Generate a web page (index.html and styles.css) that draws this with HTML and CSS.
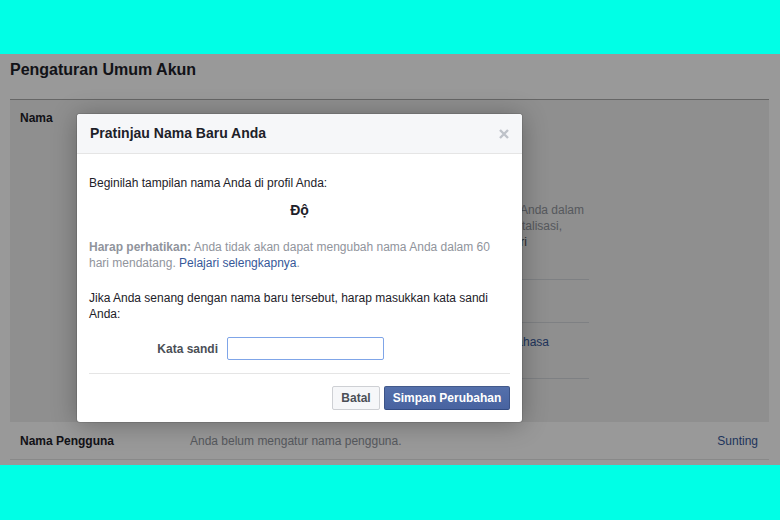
FILE: index.html
```html
<!DOCTYPE html>
<html lang="id">
<head>
<meta charset="utf-8">
<title>Pengaturan Umum Akun</title>
<link rel="stylesheet" href="styles.css">
</head>
<body>
<div class="band band-top"></div>
<main class="stage">
  <div class="page">
    <h1 class="page-title">Pengaturan Umum Akun</h1>
    <section class="row row-open">
      <div class="row-label">Nama</div>
      <div class="row-form">
        <div class="fields">
          <span class="fake-input"></span>
          <span class="fake-input"></span>
          <span class="fake-input"></span>
        </div>
        <div class="note">
          <div class="nl nl1">Anda dalam</div>
          <div class="nl nl2">kapitalisasi,</div>
          <div class="nl nl3">jari</div>
        </div>
        <div class="sep sep-first"></div>
        <div class="sub"></div>
        <div class="sep"></div>
        <div class="lang"><div class="lang-line"><a class="link">bahasa</a></div></div>
        <div class="sep"></div>
        <div class="form-actions"></div>
      </div>
    </section>
    <section class="row row-closed">
      <div class="row-label">Nama Pengguna</div>
      <div class="row-value">Anda belum mengatur nama pengguna.</div>
      <a class="link row-edit">Sunting</a>
    </section>
  </div>
  <div class="overlay"></div>
  <div class="dialog" role="dialog">
    <div class="dialog-head">
      <h2 class="dialog-title">Pratinjau Nama Baru Anda</h2>
      <svg class="dialog-close" width="10" height="10" viewBox="0 0 10 10" aria-label="Tutup"><path d="M1 1L9 9M9 1L1 9" stroke="#bec2c9" stroke-width="2.4"/></svg>
    </div>
    <div class="dialog-body">
      <p class="lead">Beginilah tampilan nama Anda di profil Anda:</p>
      <div class="preview">Độ</div>
      <p class="warn"><b>Harap perhatikan:</b> Anda tidak akan dapat mengubah nama Anda dalam 60<br>hari mendatang. <a class="link">Pelajari selengkapnya</a>.</p>
      <p class="confirm">Jika Anda senang dengan nama baru tersebut, harap masukkan kata sandi<br>Anda:</p>
      <div class="pw-row">
        <label class="pw-label" for="pw">Kata sandi</label>
        <input class="pw-input" id="pw" type="password">
      </div>
      <div class="dialog-sep"></div>
      <div class="dialog-foot">
        <button class="btn btn-cancel" type="button">Batal</button>
        <button class="btn btn-primary" type="button">Simpan Perubahan</button>
      </div>
    </div>
  </div>
</main>
<div class="band band-bottom"></div>
</body>
</html>
```
FILE: styles.css
```css
* { box-sizing: border-box; }

html, body {
  margin: 0;
  padding: 0;
}

body {
  background: #00ffe6;
  font-family: "Liberation Sans", Arial, sans-serif;
  font-size: 12px;
  line-height: 16px;
  color: #1d2129;
  width: 780px;
  height: 520px;
  overflow: hidden;
}

.band { background: #00ffe6; }
.band-top { height: 54px; }
.band-bottom { height: 55px; }

.stage {
  position: relative;
  height: 411px;
  background: #ffffff;
  overflow: hidden;
}

.page {
  padding: 0 11px 0 10px;
}

.page-title {
  margin: 0;
  padding: 6px 0 19px;
  font-size: 16px;
  line-height: 20px;
  font-weight: bold;
  color: #1d2129;
  border-bottom: 1px solid #aaaaaa;
}

.row {
  display: flex;
  padding-left: 10px;
}

.row-label {
  width: 170px;
  flex: none;
  font-weight: bold;
  color: #1d2129;
}

.row-open {
  background: #eeeeee;
  padding-top: 10px;
}

.row-form {
  width: 399px;
  display: flex;
  flex-direction: column;
}

.fields {
  margin-top: 4px;
  display: flex;
  flex-direction: column;
  gap: 5px;
  padding-left: 70px;
}

.fake-input {
  display: block;
  width: 200px;
  height: 24px;
  background: #fff;
  border: 1px solid #bdc7d8;
}

.note {
  margin-top: 6px;
  color: #90949c;
  white-space: nowrap;
}

.nl { text-align: right; }
.nl1 { width: 394px; }
.nl2 { width: 372px; }
.nl3 { width: 337px; color: #4b4f56; }

.sep {
  height: 0;
  border-top: 1px solid #d3d6db;
}

.sep-first { margin-top: 29px; }

.sub { height: 42px; }

.lang {
  height: 55px;
  padding-top: 11px;
}

.lang-line {
  width: 359px;
  text-align: right;
  white-space: nowrap;
}

.link {
  color: #365899;
  text-decoration: none;
}

.form-actions { height: 43px; }

.row-closed {
  padding-top: 11px;
  padding-bottom: 10px;
  padding-right: 11px;
  border-bottom: 1px solid #e5e5e5;
}

.row-value {
  flex: 1;
  color: #90949c;
}

.row-edit { flex: none; }

.overlay {
  position: absolute;
  inset: 0;
  background: rgba(0, 0, 0, 0.4);
}

.dialog {
  position: absolute;
  left: 77px;
  top: 60px;
  width: 445px;
  background: #ffffff;
  border-radius: 3px;
  box-shadow: 0 2px 26px rgba(0, 0, 0, 0.3), 0 0 0 1px rgba(0, 0, 0, 0.1);
}

.dialog-head {
  display: flex;
  align-items: center;
  justify-content: space-between;
  height: 40px;
  padding: 0 13px;
  background: #f6f7f9;
  border-bottom: 1px solid #e5e5e5;
  border-radius: 3px 3px 0 0;
}

.dialog-title {
  margin: 0;
  font-size: 14px;
  line-height: 19px;
  font-weight: bold;
  color: #1d2129;
}

.dialog-close { display: block; }

.dialog-body {
  padding: 21px 12px 12px;
}

.lead {
  margin: 0;
  color: #1d2129;
}

.preview {
  margin-top: 10px;
  text-align: center;
  font-size: 14px;
  line-height: 18px;
  font-weight: bold;
  color: #1d2129;
}

.warn {
  margin: 20px 0 0;
  color: #90949c;
}

.confirm {
  margin: 19px 0 0;
  color: #1d2129;
}

.pw-row {
  margin-top: 15px;
  display: flex;
  align-items: center;
}

.pw-label {
  width: 129px;
  margin-right: 9px;
  text-align: right;
  font-weight: bold;
  color: #4b4f56;
}

.pw-input {
  width: 157px;
  height: 23px;
  margin: 0;
  padding: 2px 4px;
  border: 1px solid #7fa5e8;
  border-radius: 2px;
  background: #fff;
  outline: none;
  font: 12px "Liberation Sans", Arial, sans-serif;
}

.dialog-sep {
  margin-top: 13px;
  height: 0;
  border-top: 1px solid #e5e5e5;
}

.dialog-foot {
  padding-top: 12px;
  display: flex;
  justify-content: flex-end;
  gap: 4px;
}

.btn {
  height: 24px;
  margin: 0;
  padding: 0;
  border: 1px solid;
  border-radius: 2px;
  font: bold 12px/22px "Liberation Sans", Arial, sans-serif;
  text-align: center;
  cursor: pointer;
}

.btn-cancel {
  width: 48px;
  background: #f6f7f9;
  border-color: #ced0d4;
  color: #4b4f56;
}

.btn-primary {
  width: 126px;
  background: linear-gradient(#5470ab, #4863a0);
  border-color: #435a8b #3c5488 #334c83;
  color: #ffffff;
}
```
